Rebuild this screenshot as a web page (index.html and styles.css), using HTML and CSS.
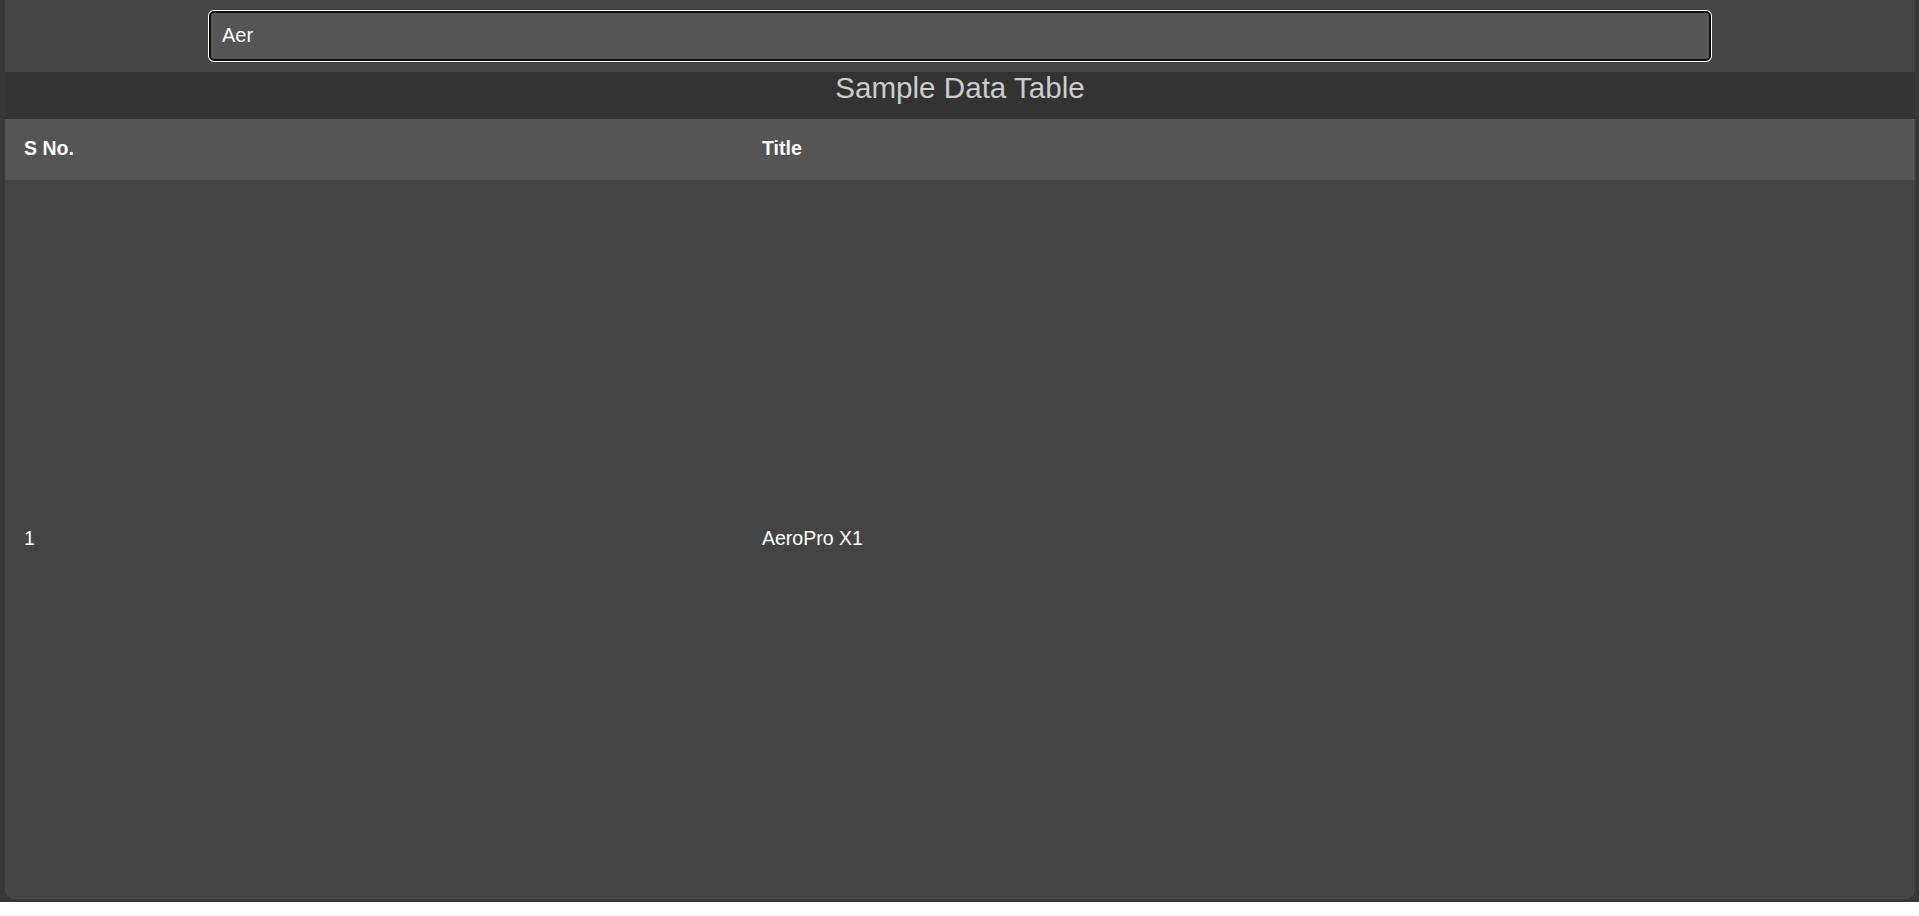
FILE: index.html
```html
<!DOCTYPE html>
<html lang="en">
<head>
<meta charset="utf-8">
<title>Sample Data Table</title>
<link rel="stylesheet" href="styles.css">
</head>
<body>
<div class="page">
  <div class="card">
    <div class="search-bar">
      <input class="search" type="text" value="Aer">
    </div>
    <h2 class="title">Sample Data Table</h2>
    <table class="data">
      <thead>
        <tr><th class="col-no">S No.</th><th>Title</th></tr>
      </thead>
      <tbody>
        <tr><td class="col-no">1</td><td>AeroPro X1</td></tr>
      </tbody>
    </table>
  </div>
</div>
</body>
</html>
```

FILE: styles.css
```css
html, body {
  margin: 0;
  padding: 0;
  background: #ffffff;
  font-family: "Liberation Sans", Arial, sans-serif;
}

.page {
  box-sizing: border-box;
  height: 902px;
  padding: 0 4px 4px 5px;
  background: #383838;
}

.card {
  height: 898px;
  display: flex;
  flex-direction: column;
  background: #444444;
  border-radius: 0 0 10px 10px;
  box-shadow: 0 1px 0 #4e4e4e;
  overflow: hidden;
}

.search-bar {
  height: 72px;
  box-sizing: border-box;
  padding-top: 11px;
  background: #454545;
  display: flex;
  justify-content: center;
}

.search {
  box-sizing: border-box;
  width: 1502px;
  height: 50px;
  margin: 0;
  padding: 0 11px 2px;
  border: 2px solid #101010;
  border-radius: 5px;
  box-shadow: 0 0 0 1px #ffffff;
  background: #555555;
  color: #ffffff;
  font-family: "Liberation Sans", Arial, sans-serif;
  font-size: 20px;
  outline: none;
}

.title {
  box-sizing: border-box;
  margin: 0;
  height: 47px;
  line-height: 32px;
  background: #333333;
  color: #cccccc;
  text-align: center;
  font-size: 29.6px;
  font-weight: normal;
}

.data {
  flex: 1;
  width: 100%;
  border-collapse: collapse;
  font-size: 19.5px;
  color: #ffffff;
}

.data thead tr {
  height: 61px;
  background: #555555;
}

.data th {
  text-align: left;
  font-weight: bold;
  padding: 0 19px 2px;
}

.data td {
  padding: 0 19px 2px;
  vertical-align: middle;
}

.data .col-no {
  width: 700px;
}
```
